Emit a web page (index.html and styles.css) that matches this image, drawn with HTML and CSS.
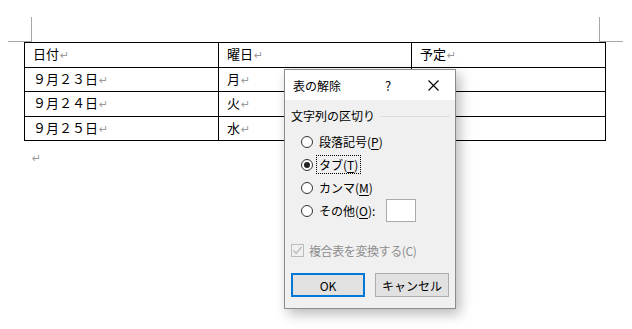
FILE: index.html
```html
<!DOCTYPE html>
<html lang="ja">
<head>
    <meta charset="UTF-8">
    <title>表の解除</title>
    <link rel="stylesheet" href="styles.css">
</head>
<body>
    <div class="page">
        <div class="marks">
            <div class="corner corner-left"></div>
            <div class="corner corner-right"></div>
        </div>
        <table class="doc-table">
            <colgroup>
                <col class="c1"><col class="c2"><col class="c3">
            </colgroup>
            <tr><td>日付<span class="pm">↵</span></td><td>曜日<span class="pm">↵</span></td><td>予定<span class="pm">↵</span></td></tr>
            <tr><td>９月２３日<span class="pm">↵</span></td><td>月<span class="pm">↵</span></td><td>祝日<span class="pm">↵</span></td></tr>
            <tr><td>９月２４日<span class="pm">↵</span></td><td>火<span class="pm">↵</span></td><td><span class="pm">↵</span></td></tr>
            <tr><td>９月２５日<span class="pm">↵</span></td><td>水<span class="pm">↵</span></td><td><span class="pm">↵</span></td></tr>
        </table>
        <div class="para"><span class="pm">↵</span></div>
    </div>

    <div class="dialog">
        <div class="dlg-title">
            <span class="dlg-caption">表の解除</span>
            <span class="dlg-help">?</span>
            <span class="dlg-close">
                <svg width="11" height="11" viewBox="0 0 11 11"><path d="M0.5 0.5 L10.5 10.5 M10.5 0.5 L0.5 10.5" stroke="#000" stroke-width="1.1" fill="none"/></svg>
            </span>
        </div>
        <div class="dlg-body">
            <div class="group-label"><span>文字列の区切り</span><span class="group-line"></span></div>
            <div class="radios">
                <div class="radio-row"><span class="radio"></span><span class="lbl">段落記号(<u>P</u>)</span></div>
                <div class="radio-row"><span class="radio checked"></span><span class="lbl focus">タブ(<u>T</u>)</span></div>
                <div class="radio-row"><span class="radio"></span><span class="lbl">カンマ(<u>M</u>)</span></div>
                <div class="radio-row"><span class="radio"></span><span class="lbl">その他(<u>O</u>):</span><span class="textbox"></span></div>
            </div>
            <div class="check-row">
                <span class="checkbox">
                    <svg width="11" height="11" viewBox="0 0 11 11"><path d="M1.5 5.5 L4.2 8.3 L9.5 2" stroke="#b5b5b5" stroke-width="1.2" fill="none"/></svg>
                </span>
                <span class="check-lbl">複合表を変換する(C)</span>
            </div>
            <div class="buttons">
                <button class="btn btn-default">OK</button>
                <button class="btn">キャンセル</button>
            </div>
        </div>
    </div>
</body>
</html>
```

FILE: styles.css
```css
body { margin: 0; background: #fff; font-family: "Noto Sans CJK JP", "Noto Sans", sans-serif; color: #000; }
.page { width: 632px; height: 329px; }
.marks { display: flex; justify-content: space-between; padding: 17px 9px 0 8px; }
.corner { width: 23px; height: 24px; border-bottom: 1px solid #a6a6a6; }
.corner-left { border-right: 1px solid #a6a6a6; }
.corner-right { border-left: 1px solid #a6a6a6; }

.doc-table { border-collapse: collapse; table-layout: fixed; width: 581px; margin-left: 24px; font-size: 13px; }
.doc-table .c1 { width: 194px; }
.doc-table .c2 { width: 193px; }
.doc-table .c3 { width: 194px; }
.doc-table td { border: 1px solid #000; padding: 0 0 0 8px; line-height: 16px; white-space: nowrap; }
.doc-table tr:nth-child(1) td, .doc-table tr:nth-child(3) td { height: 24px; }
.doc-table tr:nth-child(2) td, .doc-table tr:nth-child(4) td { height: 23px; }
.pm { color: #9a9a9a; font-size: 11px; margin-left: 1px; font-family: "DejaVu Sans", sans-serif; }
.para { margin: 7px 0 0 31px; line-height: 14px; }

.dialog { position: absolute; left: 284px; top: 69px; width: 170px; height: 238px; border: 1px solid #8c8c8c; background: #f0f0f0; box-shadow: 4px 5px 12px rgba(0,0,0,0.28); font-size: 12px; }
.dlg-title { display: flex; align-items: center; height: 30px; background: #fff; padding: 0 4px 0 8px; }
.dlg-caption { flex: 1; }
.dlg-help { width: 20px; text-align: center; margin-right: 17px; font-size: 13px; }
.dlg-close { width: 36px; display: flex; justify-content: center; }
.dlg-close svg { display: block; }

.dlg-body { padding: 0 0 0 6px; }
.group-label { display: flex; align-items: center; margin-top: 8px; line-height: 16px; }
.group-line { flex: 1; height: 0; border-top: 1px solid #dcdcdc; margin: 0 5px 0 5px; }
.radios { margin-top: 6px; padding-left: 10px; }
.radio-row { display: flex; align-items: center; height: 23px; }
.radio { width: 12px; height: 12px; border: 1px solid #333; border-radius: 50%; background: #fff; margin-right: 4px; display: flex; align-items: center; justify-content: center; box-sizing: border-box; }
.radio.checked::after { content: ""; width: 6px; height: 6px; border-radius: 50%; background: #222; }
.lbl { padding: 1px 2px; line-height: 15px; }
.lbl.focus { outline: 1px dotted #000; }
.lbl u { text-decoration-thickness: 1px; text-underline-offset: 2px; }
.textbox { width: 28px; height: 21px; border: 1px solid #ababab; background: #fff; margin-left: 9px; }

.check-row { display: flex; align-items: center; height: 20px; margin-top: 18px; }
.checkbox { width: 11px; height: 11px; border: 1px solid #bcbcbc; background: #f0f0f0; margin-right: 5px; display: flex; }
.check-lbl { color: #8d8d8d; letter-spacing: -0.4px; }

.buttons { display: flex; gap: 10px; margin-top: 13px; }
.btn { width: 74px; height: 24px; border: 1px solid #adadad; background: #e1e1e1; font-family: inherit; font-size: 12px; padding: 0; color: #000; }
.btn-default { border: 2px solid #0078d7; }
```
